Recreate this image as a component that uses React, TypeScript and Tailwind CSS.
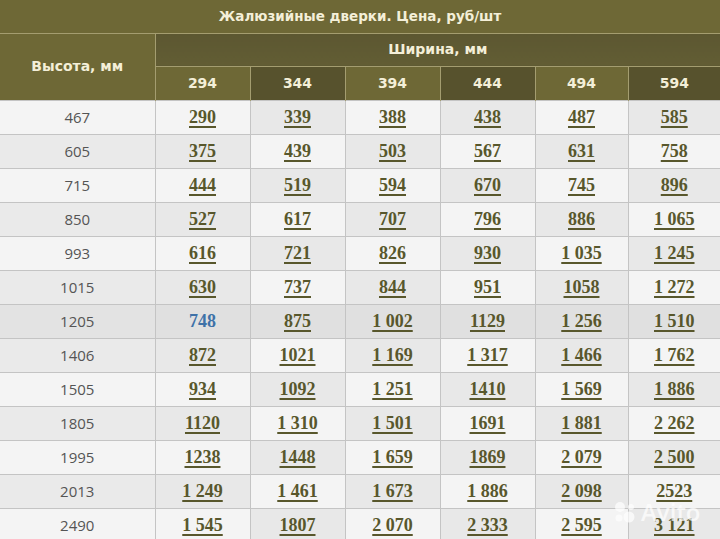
import React from "react";

const widths = [294, 344, 394, 444, 494, 594];
const rows: [string, string[]][] = [
  ["467", ["290", "339", "388", "438", "487", "585"]],
  ["605", ["375", "439", "503", "567", "631", "758"]],
  ["715", ["444", "519", "594", "670", "745", "896"]],
  ["850", ["527", "617", "707", "796", "886", "1 065"]],
  ["993", ["616", "721", "826", "930", "1 035", "1 245"]],
  ["1015", ["630", "737", "844", "951", "1058", "1 272"]],
  ["1205", ["748", "875", "1 002", "1129", "1 256", "1 510"]],
  ["1406", ["872", "1021", "1 169", "1 317", "1 466", "1 762"]],
  ["1505", ["934", "1092", "1 251", "1410", "1 569", "1 886"]],
  ["1805", ["1120", "1 310", "1 501", "1691", "1 881", "2 262"]],
  ["1995", ["1238", "1448", "1 659", "1869", "2 079", "2 500"]],
  ["2013", ["1 249", "1 461", "1 673", "1 886", "2 098", "2523"]],
  ["2490", ["1 545", "1807", "2 070", "2 333", "2 595", "3 121"]],
];

const hfont = { fontFamily: '"DejaVu Sans", Verdana, sans-serif' };

export default function App() {
  return (
    <div className="relative w-[720px] h-[539px] overflow-hidden bg-white">
      <table className="border-collapse w-[720px] table-fixed">
        <colgroup>
          <col className="w-[155px]" />
          <col className="w-[95px]" />
          <col className="w-[95px]" />
          <col className="w-[95px]" />
          <col className="w-[95px]" />
          <col className="w-[93px]" />
          <col className="w-[92px]" />
        </colgroup>
        <thead>
          <tr className="h-[33px]">
            <th
              colSpan={7}
              className="bg-[#6e6836] text-[#f4efd8] text-[13.5px] font-bold text-center border-b border-[#a49d70]"
              style={hfont}
            >
              Жалюзийные дверки. Цена, руб/шт
            </th>
          </tr>
          <tr className="h-[33px]">
            <th
              rowSpan={2}
              className="bg-[#6e6836] text-[#f4efd8] text-[14px] font-bold border-r border-[#a49d70]"
              style={hfont}
            >
              Высота, мм
            </th>
            <th
              colSpan={6}
              className="bg-gradient-to-b from-[#5c5731] to-[#625d34] text-[#f4efd8] text-[14px] font-bold border-b border-[#a49d70]"
              style={hfont}
            >
              Ширина, мм
            </th>
          </tr>
          <tr className="h-[34px]">
            {widths.map((w, i) => (
              <th
                key={w}
                className={`${i % 2 === 0 ? "bg-[#6e6836]" : "bg-[#57522d]"} text-[#f4efd8] text-[14px] font-bold border-l border-[#a49d70]`}
                style={hfont}
              >
                {w}
              </th>
            ))}
          </tr>
        </thead>
        <tbody>
          {rows.map(([h, vals], r) => {
            const hl = h === "1205";
            return (
              <tr key={h} className="h-[34px]">
                <td
                  className={`${hl ? "bg-[#e3e3e3]" : r % 2 === 0 ? "bg-[#f4f4f4]" : "bg-[#eaeaea]"} text-center text-[15px] text-[#555555] border border-[#c4c4c4] border-l-0`}
                  style={{ fontFamily: '"Open Sans", "Liberation Sans", sans-serif' }}
                >
                  {h}
                </td>
                {vals.map((v, c) => {
                  const light = (r + c) % 2 === 0;
                  const bg = hl ? "bg-[#e0e0e0]" : light ? "bg-[#f4f4f4]" : "bg-[#e8e8e8]";
                  const blue = hl && c === 0;
                  return (
                    <td
                      key={c}
                      className={`${bg} text-center border border-[#c4c4c4] ${c === 5 ? "border-r-0" : ""}`}
                    >
                      <span
                        className={`text-[18px] font-bold ${blue ? "text-[#3f72a8]" : "text-[#58572c] underline underline-offset-[3px] decoration-[1.5px]"}`}
                        style={{ fontFamily: '"Liberation Serif", "DejaVu Serif", serif', whiteSpace: "pre" }}
                      >
                        {v}
                      </span>
                    </td>
                  );
                })}
              </tr>
            );
          })}
        </tbody>
      </table>
      <div className="absolute left-[612px] top-[500px] flex items-center gap-[3px] opacity-70 pointer-events-none">
        <svg width="26" height="24" viewBox="0 0 26 24">
          <circle cx="8" cy="7" r="5" fill="white" />
          <circle cx="19" cy="7" r="3" fill="white" />
          <circle cx="7" cy="18" r="3.5" fill="white" />
          <circle cx="17" cy="17" r="5.5" fill="white" />
        </svg>
        <span
          className="text-white text-[24px] font-semibold leading-none"
          style={{ fontFamily: '"Open Sans", "Liberation Sans", sans-serif' }}
        >
          Avito
        </span>
      </div>
    </div>
  );
}
